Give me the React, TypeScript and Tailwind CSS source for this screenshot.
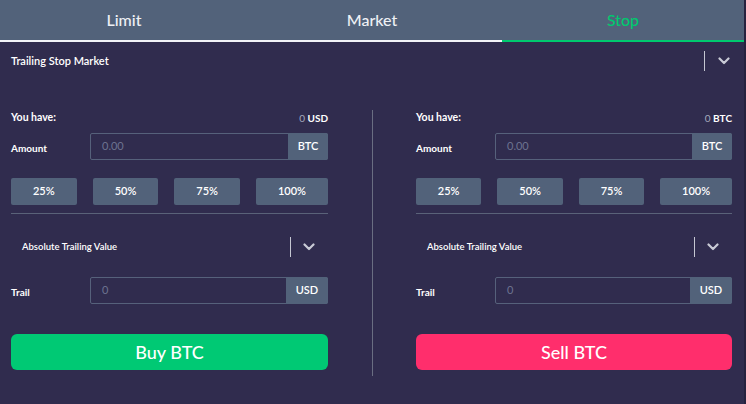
import React from "react";

const Chevron = ({ className = "" }: { className?: string }) => (
  <svg width="12" height="8" viewBox="0 0 12 8" className={className}>
    <path d="M1.5 1.5 L6 6 L10.5 1.5" fill="none" stroke="#c9cbd6" strokeWidth="2.2" strokeLinecap="round" strokeLinejoin="round" />
  </svg>
);

const InputRow = ({ label, placeholder, unit, unitW }: { label: string; placeholder: string; unit: string; unitW: string }) => (
  <div className="flex h-[27px] items-center">
    <div className="w-[79px] pt-[3px] text-[10px] font-bold text-white">{label}</div>
    <div className="flex h-full flex-1 rounded-[2px] border border-[#56617b]">
      <div className="flex flex-1 items-center pl-[11px] text-[11px] text-[#6d7390]">{placeholder}</div>
      <div className={`flex ${unitW} items-center justify-center bg-[#52627a] text-[11px] font-semibold text-white -my-px -mr-px rounded-r-[2px]`}>{unit}</div>
    </div>
  </div>
);

const Panel = ({ cur, width, action, color }: { cur: string; width: string; action: string; color: string }) => (
  <div className={`flex ${width} flex-col`}>
    <div className="flex h-[16px] items-center justify-between text-[10px] font-bold text-white">
      <span className="text-[10.5px]">You have:</span>
      <span>
        <span className="font-normal text-[#a6a9bd]">0</span> {cur}
      </span>
    </div>
    <div className="mt-[7px]">
      <InputRow label="Amount" placeholder="0.00" unit="BTC" unitW="w-[40px]" />
    </div>
    <div className="mt-[18px] flex h-[27px] gap-[16px]">
      {["25%", "50%", "75%", "100%"].map((p) => (
        <div key={p} className="flex flex-auto items-center justify-center rounded-[2px] bg-[#52627a] px-[4px] text-[11px] font-semibold text-white">
          {p}
        </div>
      ))}
    </div>
    <div className="mt-[8px] h-px bg-[#5a6279]" />
    <div className="mt-[23px] flex h-[20px] items-center pl-[11px] pr-[13px]">
      <span className="flex-1 text-[9.5px] font-semibold text-white">Absolute Trailing Value</span>
      <div className="h-[20px] w-px bg-[#c5c7d2]" />
      <Chevron className="ml-[12px]" />
    </div>
    <div className="mt-[20px]">
      <InputRow label="Trail" placeholder="0" unit="USD" unitW="w-[42px]" />
    </div>
    <div className={`mt-[30px] flex h-[36px] items-center justify-center rounded-[6px] ${color} text-[18px] font-medium text-white`}>
      {action}
    </div>
  </div>
);

export default function App() {
  return (
    <div className="flex h-[404px] w-[746px] bg-[#302c4e]" style={{ fontFamily: "Lato, 'Open Sans', sans-serif" }}>
      <div className="flex w-[744px] flex-col">
        <div className="flex h-[42px] bg-[#52627a]">
          <div className="flex w-[248px] items-center justify-center border-b-2 border-[#f2f3f7] text-[16px] font-medium text-[#eef0f5]">Limit</div>
          <div className="flex w-[254px] items-center justify-center border-b-2 border-[#f2f3f7] pr-[6px] text-[16px] font-medium text-[#eef0f5]">Market</div>
          <div className="flex flex-1 items-center justify-center border-b-2 border-[#00c96f] text-[16px] font-medium text-[#00c96f]">Stop</div>
        </div>
        <div className="flex h-[38px] items-center pl-[11px] pr-[14px]">
          <span className="flex-1 text-[11px] font-semibold text-white">Trailing Stop Market</span>
          <div className="h-[20px] w-px bg-[#c5c7d2]" />
          <Chevron className="ml-[13px]" />
        </div>
        <div className="mt-[30px] flex pl-[11px]">
          <Panel cur="USD" width="w-[317px]" action="Buy BTC" color="bg-[#00c974]" />
          <div className="ml-[44px] mr-[43px] h-[266px] w-px bg-[#6a6e82]" />
          <Panel cur="BTC" width="w-[316px]" action="Sell BTC" color="bg-[#ff2e6c]" />
        </div>
      </div>
      <div className="w-[2px] bg-[#26223f]" />
    </div>
  );
}
